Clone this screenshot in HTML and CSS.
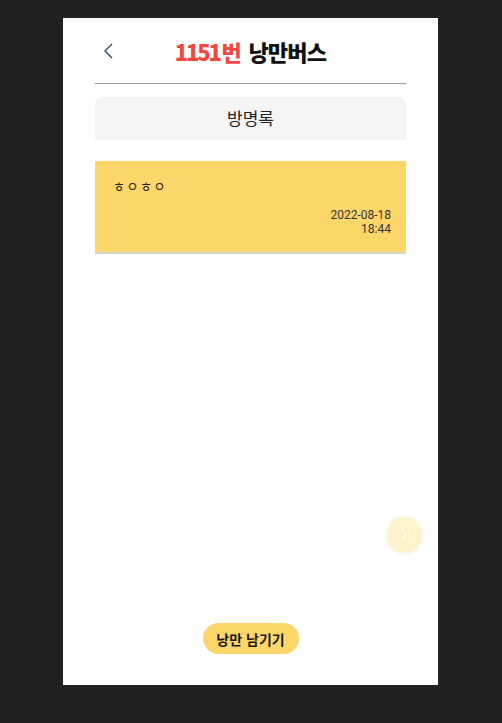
FILE: index.html
```html
<!DOCTYPE html>
<html lang="ko">
<head>
<meta charset="utf-8">
<link rel="stylesheet" href="styles.css">
</head>
<body>
<div class="phone">
  <header class="header">
    <button class="back" aria-label="뒤로">
      <svg width="12" height="18" viewBox="0 0 12 18"><path d="M9 2 L2 9 L9 16" fill="none" stroke="#2b4a60" stroke-width="1.4"/></svg>
    </button>
    <h1 class="title"><span class="num"><span class="digits">1151</span>번</span> 낭만버스</h1>
  </header>
  <div class="divider"></div>
  <div class="tab">방명록</div>
  <div class="card">
    <p class="msg">ㅎㅇㅎㅇ</p>
    <div class="date">2022-08-18<br>18:44</div>
  </div>
  <div class="spacer">
    <button class="next" aria-label="다음">
      <svg width="8" height="12" viewBox="0 0 8 12"><path d="M2 1 L6 6 L2 11" fill="none" stroke="#fff" stroke-width="1.3"/></svg>
    </button>
  </div>
  <div class="footer">
    <button class="write">낭만 남기기</button>
  </div>
</div>
</body>
</html>
```
FILE: styles.css
```css
* { box-sizing: border-box; }
html, body { margin: 0; padding: 0; }
body {
  background: #212123;
  width: 502px;
  height: 723px;
  padding: 18px 0 0 63px;
  font-family: "Noto Sans CJK KR", "Noto Sans", sans-serif;
}
.phone {
  width: 375px;
  height: 667px;
  background: #fff;
  padding: 0 32px;
  display: flex;
  flex-direction: column;
}
.header {
  height: 65px;
  position: relative;
  display: flex;
  align-items: center;
  justify-content: center;
}
.back {
  position: absolute;
  left: 8px;
  top: 24px;
  border: 0;
  background: none;
  padding: 0;
  width: 12px;
  height: 18px;
}
.back svg { display: block; }
.title {
  margin: 0;
  font-size: 22px;
  font-weight: 900;
  letter-spacing: -0.8px;
  word-spacing: 2px;
  color: #111;
  line-height: 1;
}
.num { color: #f1473f; }
.digits { letter-spacing: -2.2px; margin-right: 2px; }
.divider {
  height: 1px;
  background: #9a9a9a;
}
.tab {
  margin-top: 13px;
  height: 43px;
  padding-bottom: 3px;
  background: #f4f4f4;
  border-radius: 8px 8px 0 0;
  display: flex;
  align-items: center;
  justify-content: center;
  font-size: 17px;
  color: #222;
}
.card {
  margin-top: 21px;
  height: 93px;
  background: #fdd66a;
  border-bottom: 2px solid #d6d3cf;
  padding: 15px 15px 0 18px;
}
.msg {
  margin: 0;
  font-size: 13px;
  line-height: 20px;
  letter-spacing: 1.5px;
  color: #222;
}
.date {
  margin-top: 12px;
  text-align: right;
  font-family: Roboto, "Noto Sans", sans-serif;
  font-size: 12px;
  line-height: 14px;
  color: #333;
}
.spacer {
  flex: 1;
  position: relative;
}
.next {
  position: absolute;
  right: -16px;
  top: 263px;
  width: 36px;
  height: 36px;
  border-radius: 50%;
  border: 0;
  padding: 0;
  background: #fff2cc;
  box-shadow: 0 1px 4px rgba(0,0,0,0.06);
  display: flex;
  align-items: center;
  justify-content: center;
}
.next svg { display: block; }
.footer {
  display: flex;
  justify-content: center;
  padding-bottom: 31px;
}
.write {
  width: 96px;
  height: 31px;
  border: 0;
  border-radius: 16px;
  background: #fdd66a;
  font-family: "Noto Sans CJK KR", sans-serif;
  font-weight: 700;
  font-size: 14px;
  color: #1a1a1a;
  padding: 0;
}
```
